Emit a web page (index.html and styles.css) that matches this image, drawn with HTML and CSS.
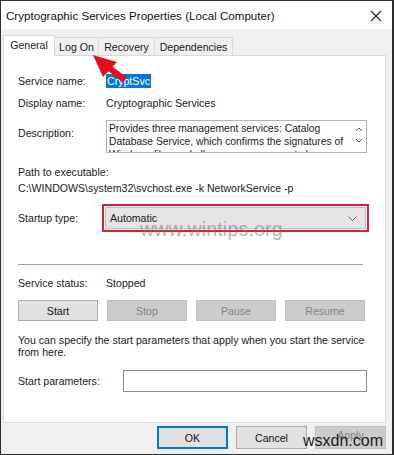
FILE: index.html
```html
<!DOCTYPE html>
<html lang="en">
<head>
    <meta charset="UTF-8">
    <title>Cryptographic Services Properties (Local Computer)</title>
    <link rel="stylesheet" href="styles.css">
</head>
<body>
    <div class="window">
        <div class="titlebar">
            <span class="title">Cryptographic Services Properties (Local Computer)</span>
            <svg class="close" width="12" height="12" viewBox="0 0 12 12">
                <path d="M1 1 L11 11 M11 1 L1 11" stroke="#222" stroke-width="1.1" fill="none"/>
            </svg>
        </div>

        <div class="dialog">
            <div class="tabs">
                <div class="tab active tab-general">General</div>
                <div class="tab tab-logon">Log On</div>
                <div class="tab tab-recovery">Recovery</div>
                <div class="tab tab-deps">Dependencies</div>
            </div>

            <div class="panel">
                <div class="row">
                    <span class="label">Service name:</span>
                    <span class="selected">CryptSvc</span>
                </div>
                <div class="row">
                    <span class="label">Display name:</span>
                    <span>Cryptographic Services</span>
                </div>
                <div class="row desc-row">
                    <span class="label">Description:</span>
                    <div class="desc-box">
                        <div class="desc-text">Provides three management services: Catalog Database Service, which confirms the signatures of Windows files and allows new programs to be installed.</div>
                        <div class="scroll">
                            <svg width="8" height="6" viewBox="0 0 8 6"><path d="M1 5 L4 2 L7 5" stroke="#555" stroke-width="1" fill="none"/></svg>
                            <svg width="8" height="6" viewBox="0 0 8 6"><path d="M1 1 L4 4 L7 1" stroke="#555" stroke-width="1" fill="none"/></svg>
                        </div>
                    </div>
                </div>

                <div class="path-label">Path to executable:</div>
                <div class="path">C:\WINDOWS\system32\svchost.exe -k NetworkService -p</div>

                <div class="row startup-row">
                    <span class="label">Startup type:</span>
                    <div class="highlight">
                        <div class="combo">
                            <span>Automatic</span>
                            <svg width="9" height="5" viewBox="0 0 9 5"><path d="M0.5 0.5 L4.5 4.5 L8.5 0.5" stroke="#666" stroke-width="1" fill="none"/></svg>
                        </div>
                    </div>
                    <span class="watermark">www.wintips.org</span>
                </div>

                <div class="separator"></div>

                <div class="row status-row">
                    <span class="label">Service status:</span>
                    <span>Stopped</span>
                </div>

                <div class="service-buttons">
                    <button class="btn">Start</button>
                    <button class="btn" disabled>Stop</button>
                    <button class="btn" disabled>Pause</button>
                    <button class="btn" disabled>Resume</button>
                </div>

                <p class="hint">You can specify the start parameters that apply when you start the service from here.</p>

                <div class="row params-row">
                    <span class="label">Start parameters:</span>
                    <div class="params-input"></div>
                </div>
            </div>

            <div class="footer">
                <button class="btn dlg default">OK</button>
                <button class="btn dlg">Cancel</button>
                <button class="btn dlg apply" disabled>Apply</button>
                <span class="site-mark">wsxdn.com</span>
            </div>

            <svg class="arrow" width="45" height="35" viewBox="0 0 45 35">
                <path d="M19 16 L36 29" stroke="#e3101c" stroke-width="6" fill="none"/>
                <polygon points="4,4 28,11 14,26" fill="#e3101c"/>
            </svg>
        </div>
    </div>
</body>
</html>
```

FILE: styles.css
```css
body {
    margin: 0;
    font-family: "Liberation Sans", Arial, sans-serif;
    font-size: 10.6px;
    color: #1a1a1a;
    background: #ffffff;
}
.window {
    position: relative;
    width: 394px;
    height: 455px;
    box-sizing: border-box;
    border: 1px solid #2e2e2e;
    border-right-width: 2px;
    background: #f0f0f0;
    overflow: hidden;
}
.titlebar {
    height: 28px;
    background: #ffffff;
    display: flex;
    align-items: center;
    justify-content: space-between;
    padding: 0 10px 0 5px;
}
.title {
    font-size: 11.6px;
    color: #111;
}
.close {
    margin-top: 1px;
}
.dialog {
    padding: 6px 6px 0 2px;
}
.tabs {
    display: flex;
    align-items: flex-end;
    height: 20px;
}
.tab {
    height: 18px;
    line-height: 18px;
    box-sizing: border-box;
    text-align: center;
    border: 1px solid #d9d9d9;
    border-bottom: none;
    margin-right: -1px;
    background: #f0f0f0;
}
.tab.active {
    height: 21px;
    line-height: 19px;
    background: #ffffff;
    position: relative;
    z-index: 1;
    margin-bottom: -1px;
}
.tab-general {
    width: 52px;
}
.tab-logon {
    width: 45px;
}
.tab-recovery {
    width: 57px;
}
.tab-deps {
    width: 79px;
}
.panel {
    background: #ffffff;
    border: 1px solid #d9d9d9;
    height: 368px;
    padding: 17px 0 0 14px;
    box-sizing: border-box;
    position: relative;
}
.row {
    display: flex;
    align-items: center;
    min-height: 15px;
}
.label {
    width: 88px;
    flex-shrink: 0;
}
.selected {
    background: #0078d7;
    color: #ffffff;
    padding: 1px 1px;
}
.row + .row {
    margin-top: 7px;
}
.desc-row {
    align-items: flex-start;
    margin-top: 10px !important;
}
.desc-row .label {
    margin-top: 7px;
}
.desc-box {
    width: 261px;
    height: 33px;
    box-sizing: border-box;
    border: 1px solid #b4b4b4;
    display: flex;
    overflow: hidden;
}
.desc-text {
    flex: 1;
    padding: 1px 0 1px 2px;
    line-height: 13px;
    font-size: 10.3px;
}
.scroll {
    width: 14px;
    display: flex;
    flex-direction: column;
    align-items: center;
    gap: 6px;
    padding-top: 5px;
}
.path-label {
    margin-top: 13px;
}
.path {
    margin-top: 4px;
}
.startup-row {
    margin-top: 10px;
    position: relative;
}
.startup-row .label {
    width: 84px;
}
.highlight {
    border: 2px solid #e0202c;
    padding: 1px;
}
.combo {
    width: 261px;
    height: 22px;
    box-sizing: border-box;
    background: #e5e5e5;
    border: 1px solid #c2c2c2;
    display: flex;
    align-items: center;
    justify-content: space-between;
    padding: 0 8px 0 4px;
}
.watermark {
    position: absolute;
    left: 122px;
    top: 14px;
    font-size: 19.5px;
    color: rgba(110, 110, 110, 0.5);
    letter-spacing: 0.2px;
}
.separator {
    height: 1px;
    background: #a0a0a0;
    width: 345px;
    margin-top: 32px;
}
.status-row {
    margin-top: 10px;
}
.service-buttons {
    display: flex;
    gap: 9px;
    margin-top: 10px;
}
.btn {
    font-family: inherit;
    font-size: 10.6px;
    width: 80px;
    height: 21px;
    padding: 0;
    background: #e1e1e1;
    border: 1px solid #adadad;
    color: #111;
}
.btn:disabled {
    background: #cccccc;
    border-color: #bfbfbf;
    color: #838383;
}
.hint {
    margin: 13px 0 0 0;
    width: 350px;
    line-height: 12px;
}
.params-row {
    margin-top: 12px;
}
.params-row .label {
    width: 105px;
}
.params-input {
    width: 244px;
    height: 22px;
    box-sizing: border-box;
    border: 1px solid #8c8c8c;
}
.footer {
    display: flex;
    justify-content: flex-end;
    gap: 8px;
    padding: 3px 0 0 0;
    position: relative;
}
.btn.dlg {
    width: 71px;
    height: 23px;
}
.btn.dlg.apply {
    padding-bottom: 6px;
}
.btn.default {
    border: 2px solid #0078d7;
}
.site-mark {
    position: absolute;
    right: 3px;
    top: 9px;
    font-size: 16px;
    color: #1a1a1a;
}
.arrow {
    position: absolute;
    left: 88px;
    top: 50px;
}
```
